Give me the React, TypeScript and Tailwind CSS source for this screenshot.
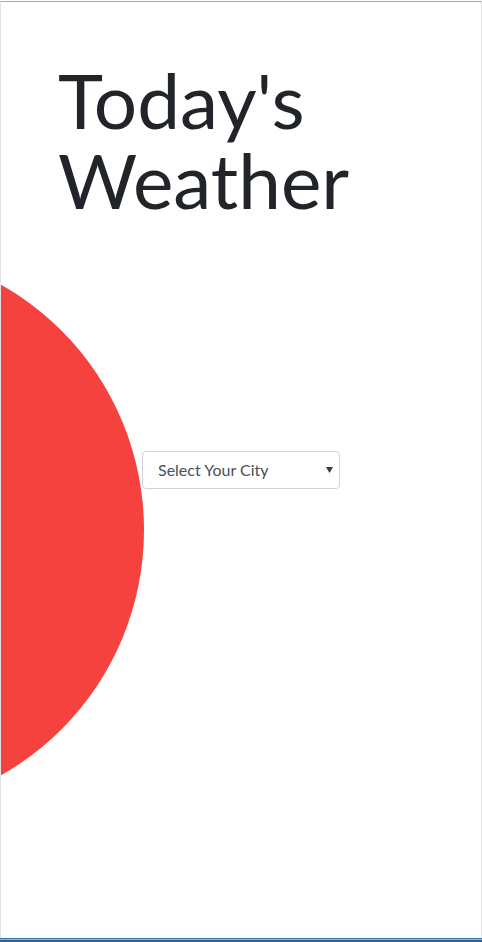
import { useState, ChangeEvent } from "react";

export default function App() {
  const [city, setCity] = useState("");

  const handleChange = (e: ChangeEvent<HTMLSelectElement>) => {
    setCity(e.target.value);
  };

  return (
    <div className="w-[482px] h-[942px] bg-white flex flex-col overflow-hidden">
      <div className="h-px bg-white" />
      <main
        className="relative flex-1 flex flex-col border-t border-[#a8a8a8] border-x border-x-[#e2e2e2] overflow-hidden"
        style={{ fontFamily: "Lato, 'Open Sans', sans-serif" }}
      >
        {/* Title */}
        <h1 className="pl-[57px] pt-[57px] text-[76.5px] leading-[80px] font-normal text-[#212529]">
          <span className="block">Today's</span>
          <span className="block">Weather</span>
        </h1>

        {/* Sun + city picker */}
        <section className="flex items-start mt-[29px]">
          <div className="shrink-0 w-[564px] h-[564px] -ml-[421px] rounded-full bg-[#f6423f]" />
          <div className="relative -ml-[2px] mt-[203px] w-[198px]">
            <select
              value={city}
              onChange={handleChange}
              className="appearance-none w-full h-[38px] pl-[15px] pr-7 rounded-[4px] border border-[#ced4da] bg-white text-[16px] text-[#495057] focus:outline-none"
              style={{ fontFamily: "Lato, 'Open Sans', sans-serif" }}
            >
              <option value="">Select Your City</option>
              <option value="london">London</option>
              <option value="paris">Paris</option>
              <option value="tokyo">Tokyo</option>
            </select>
            <svg
              className="absolute right-[7px] top-[16px] pointer-events-none"
              width="7"
              height="6"
              viewBox="0 0 7 6"
            >
              <path d="M0 0 L7 0 L3.5 6 Z" fill="#343a40" />
            </svg>
          </div>
        </section>
      </main>
      <div className="h-px bg-[#3d73ad]" />
      <div className="h-px bg-[#8db6df]" />
      <div className="h-[2px] bg-[#2f5f93]" />
    </div>
  );
}
